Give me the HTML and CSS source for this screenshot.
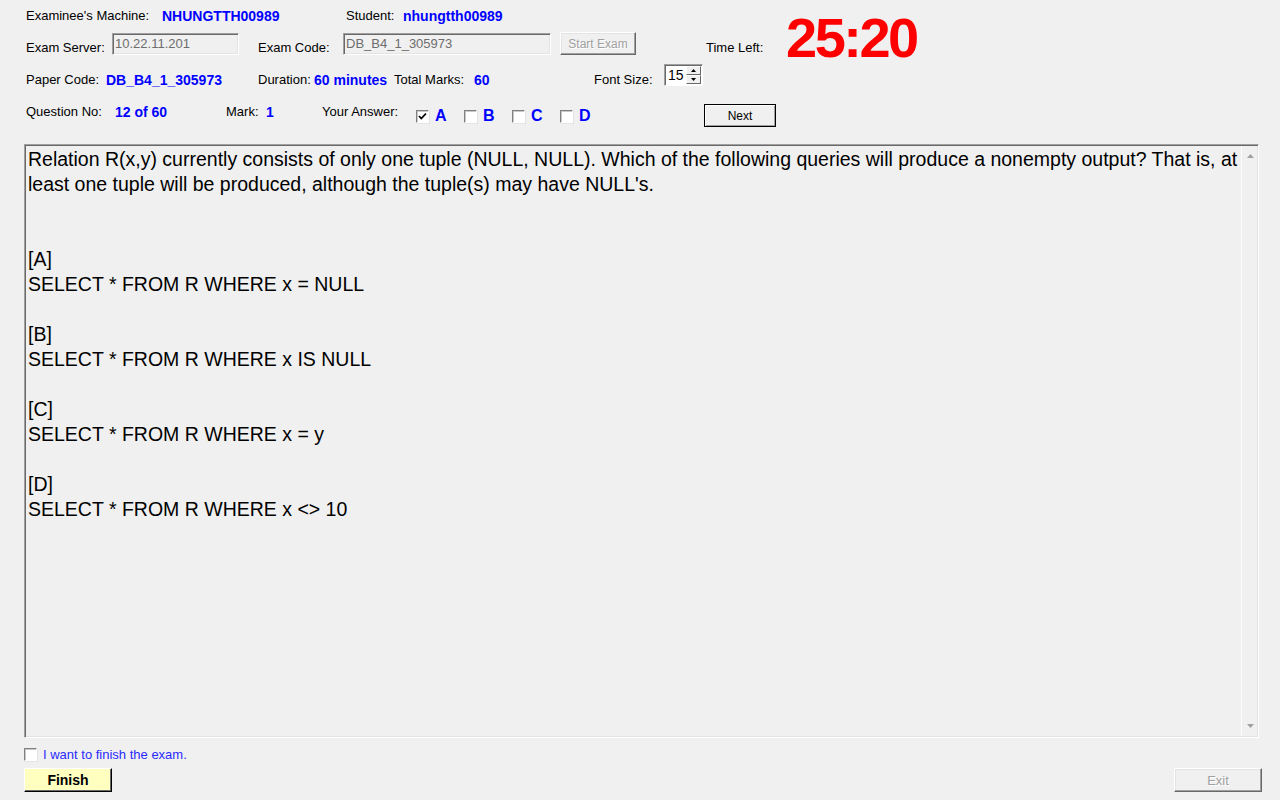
FILE: index.html
```html
<!DOCTYPE html>
<html>
<head>
<meta charset="utf-8">
<link rel="stylesheet" href="styles.css">
</head>
<body>
<div class="form">
  <div class="top">
    <div class="top-left">
      <div class="row">
        <span class="lbl w136">Examinee's Machine:</span>
        <span class="val w184">NHUNGTTH00989</span>
        <span class="lbl w57">Student:</span>
        <span class="val">nhungtth00989</span>
      </div>
      <div class="row">
        <span class="lbl w86">Exam Server:</span>
        <span class="tbox tb-server">10.22.11.201</span>
        <span class="lbl w85">Exam Code:</span>
        <span class="tbox tb-code">DB_B4_1_305973</span>
        <span class="btn btn-disabled btn-start">Start Exam</span>
      </div>
    </div>
    <span class="lbl timeleft">Time Left:</span>
    <span class="timer">25:20</span>
  </div>

  <div class="row">
    <span class="lbl w80">Paper Code:</span>
    <span class="val w152">DB_B4_1_305973</span>
    <span class="lbl w56">Duration:</span>
    <span class="val w80">60 minutes</span>
    <span class="lbl w80">Total Marks:</span>
    <span class="val w120">60</span>
    <span class="lbl w70">Font Size:</span>
    <span class="spin">
      <span class="spin-num">15</span>
      <span class="spin-btns">
        <span class="spin-btn"><svg width="5" height="3" viewBox="0 0 5 3"><path d="M2.5 0 L5 3 L0 3 Z" fill="#000"/></svg></span>
        <span class="spin-btn"><svg width="5" height="3" viewBox="0 0 5 3"><path d="M0 0 L5 0 L2.5 3 Z" fill="#000"/></svg></span>
      </span>
    </span>
  </div>

  <div class="row">
    <span class="lbl w89">Question No:</span>
    <span class="val w111">12 of 60</span>
    <span class="lbl w40">Mark:</span>
    <span class="val w56">1</span>
    <span class="lbl w94">Your Answer:</span>
    <span class="cb cb-ans"><svg width="9" height="9" viewBox="0 0 9 9"><path d="M1 4 L3.3 6.5 L8 1.5" fill="none" stroke="#000" stroke-width="1.8"/></svg></span>
    <span class="opt">A</span>
    <span class="cb cb-ans"></span>
    <span class="opt">B</span>
    <span class="cb cb-ans"></span>
    <span class="opt">C</span>
    <span class="cb cb-ans"></span>
    <span class="opt opt-last">D</span>
    <span class="btn btn-next">Next</span>
  </div>

  <div class="qbox">
    <div class="qtext">Relation R(x,y) currently consists of only one tuple (NULL, NULL). Which of the following queries will produce a nonempty output? That is, at least one tuple will be produced, although the tuple(s) may have NULL's.<br><br><br>[A]<br>SELECT * FROM R WHERE x = NULL<br><br>[B]<br>SELECT * FROM R WHERE x IS NULL<br><br>[C]<br>SELECT * FROM R WHERE x = y<br><br>[D]<br>SELECT * FROM R WHERE x &lt;&gt; 10</div>
    <div class="vscroll">
      <svg width="7" height="4" viewBox="0 0 7 4"><path d="M3.5 0 L7 4 L0 4 Z" fill="#a0a0a0"/></svg>
      <svg width="7" height="4" viewBox="0 0 7 4"><path d="M0 0 L7 0 L3.5 4 Z" fill="#a0a0a0"/></svg>
    </div>
  </div>

  <div class="finish-row">
    <span class="cb"></span>
    <span class="finish-lbl">I want to finish the exam.</span>
  </div>

  <div class="btn-row">
    <span class="btn btn-finish">Finish</span>
    <span class="btn btn-disabled btn-exit">Exit</span>
  </div>
</div>
</body>
</html>
```

FILE: styles.css
```css
* { box-sizing: border-box; }
html, body { margin: 0; padding: 0; }
body {
  background: #f0f0f0;
  font-family: "Liberation Sans", Arial, sans-serif;
  color: #000;
  width: 1280px;
  height: 800px;
  overflow: hidden;
}
.form { width: 1280px; height: 800px; }

.top { display: flex; height: 64px; }
.top-left { width: 706px; flex: none; }

.row {
  display: flex;
  align-items: flex-start;
  padding-left: 26px;
  height: 32px;
}

.lbl, .val {
  flex: none;
  margin-top: 8px;
  line-height: 16px;
  white-space: nowrap;
}
.lbl { font-size: 13px; }
.val { font-size: 14px; font-weight: bold; color: #0000ff; }

.w40 { width: 40px; } .w56 { width: 56px; } .w57 { width: 57px; }
.w70 { width: 70px; } .w80 { width: 80px; } .w85 { width: 85px; }
.w86 { width: 86px; } .w89 { width: 89px; } .w94 { width: 94px; }
.w111 { width: 111px; } .w120 { width: 120px; } .w136 { width: 136px; }
.w152 { width: 152px; } .w184 { width: 184px; }

.tbox {
  flex: none;
  margin-top: 1px;
  height: 22px;
  padding: 2px 0 0 2px;
  font-size: 13px;
  line-height: 16px;
  color: #6d6d6d;
  background: #f0f0f0;
  border-top: 1px solid #a0a0a0;
  border-left: 1px solid #a0a0a0;
  border-right: 1px solid #fff;
  border-bottom: 1px solid #fff;
  box-shadow: inset 1px 1px 0 #696969, inset -1px -1px 0 #e3e3e3;
  white-space: nowrap;
}
.tb-server { width: 127px; margin-right: 19px; }
.tb-code { width: 208px; margin-right: 9px; }

.btn {
  flex: none;
  display: flex;
  align-items: center;
  justify-content: center;
  font-size: 12px;
  background: #f0f0f0;
  white-space: nowrap;
}
.btn-disabled {
  color: #a0a0a0;
  text-shadow: 1px 1px 0 #fff;
  border-top: 1px solid #fff;
  border-left: 1px solid #fff;
  border-right: 1px solid #696969;
  border-bottom: 1px solid #696969;
  box-shadow: inset -1px -1px 0 #a0a0a0, inset 1px 1px 0 #e3e3e3;
}
.btn-start { width: 76px; height: 23px; }

.timeleft { margin-top: 40px; width: 80px; }
.timer {
  flex: none;
  margin-top: 10px;
  font-size: 56px;
  line-height: 56px;
  font-weight: bold;
  color: #ff0000;
  letter-spacing: -2.5px;
}

.spin {
  flex: none;
  display: flex;
  width: 39px;
  height: 22px;
  background: #fff;
  border-top: 1px solid #a0a0a0;
  border-left: 1px solid #a0a0a0;
  border-right: 1px solid #fff;
  border-bottom: 1px solid #fff;
  box-shadow: inset 1px 1px 0 #696969;
}
.spin-num {
  flex: 1;
  font-size: 14px;
  line-height: 18px;
  padding: 1px 0 0 3px;
}
.spin-btns {
  display: flex;
  flex-direction: column;
  width: 16px;
  padding: 1px 1px 1px 0;
}
.spin-btn {
  flex: 1;
  display: flex;
  align-items: center;
  justify-content: center;
  background: #f0f0f0;
  border-top: 1px solid #fff;
  border-left: 1px solid #fff;
  border-right: 1px solid #696969;
  border-bottom: 1px solid #696969;
}

.cb {
  flex: none;
  width: 13px;
  height: 13px;
  background: #fff;
  border-top: 1px solid #808080;
  border-left: 1px solid #808080;
  border-right: 1px solid #fff;
  border-bottom: 1px solid #fff;
  box-shadow: inset 1px 1px 0 #c8c8c8, 1px 1px 0 #e3e3e3;
  display: flex;
  align-items: center;
  justify-content: center;
}
.cb-ans { margin-top: 14px; margin-right: 6px; }

.opt {
  flex: none;
  width: 29px;
  margin-top: 107px;
  margin-top: 11px;
  font-size: 16px;
  line-height: 18px;
  font-weight: bold;
  color: #0000ff;
}
.opt-last { width: 125px; }

.btn-next {
  margin-top: 8px;
  width: 72px;
  height: 23px;
  color: #000;
  border: 1px solid #000;
  box-shadow: inset 1px 1px 0 #fff, inset -1px -1px 0 #a0a0a0;
}

.qbox {
  display: flex;
  margin: 16px 0 0 24px;
  width: 1235px;
  height: 594px;
  border-top: 1px solid #a0a0a0;
  border-left: 1px solid #a0a0a0;
  border-right: 1px solid #fff;
  border-bottom: 1px solid #fff;
  box-shadow: inset 1px 1px 0 #696969, inset -1px -1px 0 #e3e3e3;
}
.qtext {
  flex: 1;
  padding: 2px 0 0 3px;
  font-size: 19.5px;
  line-height: 25px;
  color: #000;
}
.vscroll {
  flex: none;
  width: 16px;
  margin: 1px 1px 1px 0;
  border-left: 1px solid #fcfcfc;
  background: #f0f0f0;
  display: flex;
  flex-direction: column;
  align-items: center;
  justify-content: space-between;
  padding: 8px 0 8px 1px;
}

.finish-row {
  display: flex;
  align-items: center;
  margin: 10px 0 0 24px;
  height: 13px;
}
.finish-lbl {
  margin-left: 6px;
  font-size: 13px;
  line-height: 16px;
  color: #2a2aff;
  white-space: nowrap;
}

.btn-row {
  display: flex;
  justify-content: space-between;
  margin: 7px 18px 0 24px;
}
.btn-finish {
  width: 88px;
  height: 24px;
  background: #ffffc0;
  font-size: 14px;
  font-weight: bold;
  border-top: 1px solid #fff;
  border-left: 1px solid #fff;
  border-right: 1px solid #000;
  border-bottom: 1px solid #000;
  box-shadow: inset -1px -1px 0 #696969;
}
.btn-exit {
  width: 88px;
  height: 24px;
  font-size: 13px;
}
```
